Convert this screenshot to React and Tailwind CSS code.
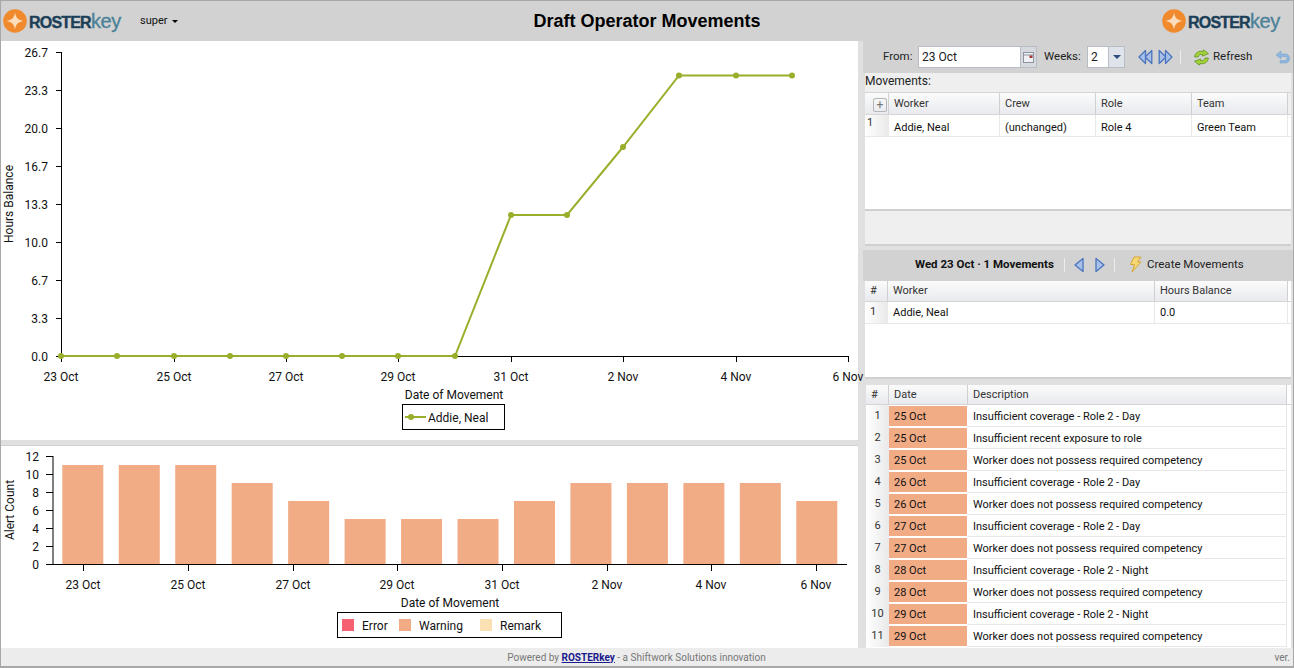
import React from "react";

const font = "font-['Roboto',sans-serif]";

const lineX = [61, 117, 174, 230, 286, 342, 398, 455, 511, 567, 623, 679, 736, 792];
const lineY = [356, 356, 356, 356, 356, 356, 356, 356, 215, 215, 147, 75.5, 75.5, 75.5];
const lineYTicks = [
  ["26.7", 52], ["23.3", 90], ["20.0", 128], ["16.7", 166], ["13.3", 204],
  ["10.0", 242], ["6.7", 280], ["3.3", 318], ["0.0", 356],
];
const lineXTicks = [
  ["23 Oct", 61], ["25 Oct", 174], ["27 Oct", 286], ["29 Oct", 398],
  ["31 Oct", 511], ["2 Nov", 623], ["4 Nov", 736], ["6 Nov", 848],
];
const barValues = [11, 11, 11, 9, 7, 5, 5, 5, 7, 9, 9, 9, 9, 7];
const barXTicks = [
  ["23 Oct", 83], ["25 Oct", 188], ["27 Oct", 293], ["29 Oct", 397],
  ["31 Oct", 502], ["2 Nov", 607], ["4 Nov", 711], ["6 Nov", 816],
];
const alerts = [
  ["25 Oct", "Insufficient coverage - Role 2 - Day"],
  ["25 Oct", "Insufficient recent exposure to role"],
  ["25 Oct", "Worker does not possess required competency"],
  ["26 Oct", "Insufficient coverage - Role 2 - Day"],
  ["26 Oct", "Worker does not possess required competency"],
  ["27 Oct", "Insufficient coverage - Role 2 - Day"],
  ["27 Oct", "Worker does not possess required competency"],
  ["28 Oct", "Insufficient coverage - Role 2 - Night"],
  ["28 Oct", "Worker does not possess required competency"],
  ["29 Oct", "Insufficient coverage - Role 2 - Night"],
  ["29 Oct", "Worker does not possess required competency"],
];

const Logo = () => (
  <div className="flex items-center h-[34px] w-[120px]">
    <svg width="24" height="24" viewBox="0 0 24 24" className="shrink-0">
      <circle cx="12" cy="12" r="11.8" fill="#f08a2c" />
      <path d="M12 3.5 C13 9 15 11 20.5 12 C15 13 13 15 12 20.5 C11 15 9 13 3.5 12 C9 11 11 9 12 3.5 Z" fill="#fbdcbb" />
    </svg>
    <span className="ml-[2px] flex items-baseline font-['Liberation_Sans',sans-serif] leading-none">
      <span className="text-[16px] font-bold tracking-[-0.8px] text-[#1c3f58] [-webkit-text-stroke:0.4px_#1c3f58]">ROSTER</span>
      <span className="text-[20px] tracking-[-0.4px] text-[#4b8198] [-webkit-text-stroke:0.3px_#4b8198]">key</span>
    </span>
  </div>
);

const Header = () => (
  <div className="grid grid-cols-[1fr_auto_1fr] items-center h-[40px] bg-[#d2d2d2]">
    <div className="flex items-center pl-[2px]">
      <Logo />
      <span className="ml-[17px] text-[11px] text-[#111]">super</span>
      <span className="ml-[5px] mt-[1px] w-0 h-0 border-x-[3px] border-x-transparent border-t-[3px] border-t-black" />
    </div>
    <h1 className="font-['Liberation_Sans',sans-serif] text-[18px] font-bold text-black">Draft Operator Movements</h1>
    <div className="flex justify-end pr-[11px]">
      <Logo />
    </div>
  </div>
);

const LineChart = () => (
  <svg width="857" height="399" viewBox="1 41 857 399" className="block bg-white overflow-visible">
    <g stroke="#000" fill="none">
      <path d="M61.5 52V357" />
      {lineYTicks.map(([l, y]) => <path key={l} d={`M56 ${y + 0.5}H61`} />)}
      <path d="M56 356.5H848" />
      {lineXTicks.map(([l, x]) => <path key={l} d={`M${x + 0.5} 356V362`} />)}
    </g>
    <g fontSize="12" fill="#111">
      {lineYTicks.map(([l, y]) => <text key={l} x="48" y={y + 5} textAnchor="end">{l}</text>)}
      {lineXTicks.map(([l, x]) => <text key={l} x={x} y="381" textAnchor="middle">{l}</text>)}
      <text x="454" y="399" textAnchor="middle">Date of Movement</text>
      <text transform="translate(13 204) rotate(-90)" textAnchor="middle">Hours Balance</text>
    </g>
    <polyline points={lineX.map((x, i) => `${x},${lineY[i]}`).join(" ")} fill="none" stroke="#9aae2b" strokeWidth="2" />
    {lineX.map((x, i) => <circle key={x} cx={x} cy={lineY[i]} r="3" fill="#9aae2b" />)}
    <rect x="402.5" y="404.5" width="102" height="25" fill="#fff" stroke="#000" />
    <path d="M405 417H426" stroke="#9aae2b" strokeWidth="2" />
    <circle cx="411" cy="417" r="3" fill="#9aae2b" />
    <text x="428" y="422" fontSize="12" fill="#111">Addie, Neal</text>
  </svg>
);

const BarChart = () => (
  <svg width="857" height="202" viewBox="1 446 857 202" className="block bg-white">
    {barValues.map((v, i) => (
      <rect key={i} x={62.3 + i * 56.46} y={564 - v * 9} width="41" height={v * 9} fill="#f1ab85" />
    ))}
    <g stroke="#000" fill="none">
      <path d="M53 456V565" />
      {[0, 1, 2, 3, 4, 5, 6].map((i) => <path key={i} d={`M46 ${456.5 + i * 18}H53`} />)}
      <path d="M46 564.5H847" />
      {barXTicks.map(([l, x]) => <path key={l} d={`M${x + 0.5} 564V571`} />)}
    </g>
    <g fontSize="12" fill="#111">
      {[12, 10, 8, 6, 4, 2, 0].map((v, i) => <text key={v} x="39" y={461 + i * 18} textAnchor="end">{v}</text>)}
      {barXTicks.map(([l, x]) => <text key={l} x={x} y="589" textAnchor="middle">{l}</text>)}
      <text x="450" y="607" textAnchor="middle">Date of Movement</text>
      <text transform="translate(14 510) rotate(-90)" textAnchor="middle">Alert Count</text>
    </g>
    <rect x="337.5" y="612.5" width="224" height="25" fill="#fff" stroke="#000" />
    <rect x="342" y="619" width="12" height="12" fill="#f56170" />
    <rect x="399" y="619" width="12" height="12" fill="#f1ab85" />
    <rect x="480" y="619" width="12" height="12" fill="#fbe0b4" />
    <g fontSize="12" fill="#111">
      <text x="362" y="630">Error</text>
      <text x="419" y="630">Warning</text>
      <text x="500" y="630">Remark</text>
    </g>
  </svg>
);

const Sep = ({ className = "" }) => <span className={`w-[1px] h-[14px] bg-[#ececec] ${className}`} />;

const ArrowIcon = ({ dir, double }) => (
  <svg width={double ? 15 : 12} height="16" viewBox={double ? "0 0 15 16" : "0 0 12 16"} className="shrink-0">
    <g fill="#a9c1ea" stroke="#4a74bd" strokeWidth="1.3" strokeLinejoin="round" transform={dir === "right" ? (double ? "translate(15 0) scale(-1 1)" : "translate(12 0) scale(-1 1)") : undefined}>
      {double ? (
        <>
          <path d="M13.8 1.5V14.5L7 8Z" />
          <path d="M7.5 1.5V14.5L1 8Z" />
        </>
      ) : (
        <path d="M10 1.5V14.5L2 8Z" />
      )}
    </g>
  </svg>
);

const RefreshIcon = () => (
  <svg width="15" height="17" viewBox="0 0 15 16" className="shrink-0">
    <path d="M.7 7.5C1 3.2 5 .9 9 2L9.5 .3L14.5 4.2L8.3 6.6L8.6 5C6.5 4.4 4.6 5.4 4 7.5Z" fill="#a6d136" stroke="#5c9420" strokeWidth=".8" />
    <path d="M14.3 8.5C14 12.8 10 15.1 6 14L5.5 15.7L.5 11.8L6.7 9.4L6.4 11C8.5 11.6 10.4 10.6 11 8.5Z" fill="#a6d136" stroke="#5c9420" strokeWidth=".8" />
  </svg>
);

const Toolbar = () => (
  <div className="flex items-center h-[32px] bg-[#d2d2d2] text-[11.5px] text-[#222] overflow-hidden">
    <span className="ml-[20px] w-[35px] shrink-0">From:</span>
    <div className="flex h-[22px] w-[119px] shrink-0 border border-[#b8bcc4] bg-white">
      <span className="flex-1 pl-[3px] text-[12px] leading-[20px] text-[#222]">23 Oct</span>
      <span className="flex w-[16px] items-center justify-center bg-[#d6d9de] border-l border-[#b8bcc4]">
        <svg width="11" height="11" viewBox="0 0 11 11">
          <rect x=".5" y=".5" width="10" height="10" fill="#eef0f3" stroke="#8b94a3" />
          <path d="M1 3H10" stroke="#8b94a3" />
          <rect x="6.5" y="3.5" width="3" height="2.5" fill="#a33" />
        </svg>
      </span>
    </div>
    <span className="ml-[7px] w-[43px] shrink-0">Weeks:</span>
    <div className="flex h-[22px] w-[38px] shrink-0 border border-[#b8bcc4] bg-white">
      <span className="flex-1 pl-[3px] text-[12px] leading-[20px]">2</span>
      <span className="flex w-[16px] items-center justify-center bg-[#dfe3ea] border-l border-[#b8bcc4]">
        <span className="w-0 h-0 border-x-[4px] border-x-transparent border-t-[4px] border-t-[#2d4d80]" />
      </span>
    </div>
    <span className="ml-[13px] flex gap-[5px]">
      <ArrowIcon dir="left" double />
      <ArrowIcon dir="right" double />
    </span>
    <Sep className="ml-[7px]" />
    <span className="ml-[13px] flex"><RefreshIcon /></span>
    <span className="ml-[4px] w-[62px] shrink-0">Refresh</span>
    <svg width="15" height="14" viewBox="0 0 15 14" className="shrink-0">
      <path d="M6 1L1 5L6 9V6.5H10C11.5 6.5 12 7.5 12 8.5C12 9.5 11.5 10.5 10 10.5H5V13H10.5C13 13 14.5 11 14.5 8.5C14.5 6 13 4 10.5 4H6Z" fill="#8fb6dc" stroke="#7ba6d2" strokeWidth=".6" />
    </svg>
  </div>
);

const headCell = "h-full flex items-center pl-[5px] border-r border-[#d0d0d0] bg-linear-to-b from-[#fbfbfb] to-[#e8eaee] text-[11px] text-[#333]";
const bodyCell = "h-full flex items-center pl-[5px] border-r border-[#e8e8e8] text-[11px] text-[#111]";
const numCell = "h-full flex items-center bg-linear-to-r from-[#ffffff] to-[#e9e9e9] text-[11px] text-[#333]";

const MovementsGrid = () => (
  <div className="flex flex-col h-[173px] mx-[2px] border-b-2 border-[#d0d0d0] bg-[#efefef]">
    <div className="h-[19px] text-[12px] leading-[17px] text-[#222]">Movements:</div>
    <div className="flex h-[23px] border-y border-[#d5d5d5]">
      <div className={`${headCell} w-[24px] justify-end !pl-0 pr-[1px] pt-[2px]`}>
        <span className="flex h-[14px] w-[14px] items-center justify-center rounded-[2px] border border-[#b5b5b5] text-[12px] leading-none text-[#777]">+</span>
      </div>
      <div className={`${headCell} w-[111px] pt-[2px]`}>Worker</div>
      <div className={`${headCell} w-[96px] pt-[2px]`}>Crew</div>
      <div className={`${headCell} w-[96px] pt-[2px]`}>Role</div>
      <div className={`${headCell} w-[96px] pt-[2px]`}>Team</div>
    </div>
    <div className="flex-1 bg-white">
      <div className="flex h-[22px] border-b border-[#e8e8e8]">
        <div className={`${numCell} w-[24px] !items-start pl-[2px]`}>1</div>
        <div className={`${bodyCell} w-[111px] pt-[5px]`}>Addie, Neal</div>
        <div className={`${bodyCell} w-[96px] pt-[5px]`}>(unchanged)</div>
        <div className={`${bodyCell} w-[96px] pt-[5px]`}>Role 4</div>
        <div className={`${bodyCell} w-[96px] pt-[5px]`}>Green Team</div>
      </div>
    </div>
    <div className="h-[35px] border-t-2 border-[#d0d0d0] bg-[#efefef]" />
  </div>
);

const DayToolbar = () => (
  <div className="flex items-center h-[31px] pb-[2px] mt-[4px] bg-[#d2d2d2] text-[11.5px] text-[#222]">
    <span className="ml-[52px] w-[139px] shrink-0 whitespace-nowrap font-bold text-[#111]">Wed 23 Oct · 1 Movements</span>
    <Sep className="ml-[10px]" />
    <span className="ml-[8px] flex"><ArrowIcon dir="left" /></span>
    <span className="ml-[9px] flex"><ArrowIcon dir="right" /></span>
    <Sep className="ml-[8px]" />
    <svg width="15" height="17" viewBox="0 0 15 17" className="ml-[13px] shrink-0">
      <path d="M6 1H13L9.5 6H13L4 16L6.5 8.5H2.5Z" fill="#f7d774" stroke="#d7a63a" strokeLinejoin="round" />
    </svg>
    <span className="ml-[4px]">Create Movements</span>
  </div>
);

const BalanceGrid = () => (
  <div className="h-[98px] mx-[2px] border-b-2 border-[#d0d0d0] bg-white">
    <div className="flex h-[21px] border-b border-[#d5d5d5]">
      <div className={`${headCell} w-[23px]`}>#</div>
      <div className={`${headCell} w-[267px]`}>Worker</div>
      <div className={`${headCell} w-[133px]`}>Hours Balance</div>
    </div>
    <div className="flex h-[22px] border-b border-[#e8e8e8]">
      <div className={`${numCell} w-[23px] pl-[5px]`}>1</div>
      <div className={`${bodyCell} w-[267px] pt-[2px]`}>Addie, Neal</div>
      <div className={`${bodyCell} w-[133px] pt-[2px]`}>0.0</div>
    </div>
  </div>
);

const AlertGrid = () => (
  <div className="flex-1 mt-[6px] ml-[3px] mr-[2px] bg-white overflow-hidden">
    <div className="flex h-[20px] border-b border-[#d5d5d5]">
      <div className={`${headCell} w-[23px] pt-[2px]`}>#</div>
      <div className={`${headCell} w-[79px] pt-[2px]`}>Date</div>
      <div className={`${headCell} w-[319px] pt-[2px]`}>Description</div>
    </div>
    {alerts.map(([date, text], i) => (
      <div key={i} className="flex h-[22px]">
        <div className={`${numCell} w-[23px] justify-center`}>{i + 1}</div>
        <div className="h-[20px] w-[78px] mt-[1px] mr-[1px] bg-[#f1ab85] pl-[5px] text-[11px] leading-[21px] text-[#111]">{date}</div>
        <div className={`${bodyCell} w-[319px] !h-[22px] border-b pt-[3px]`}>{text}</div>
      </div>
    ))}
  </div>
);

const Footer = () => (
  <div className="relative flex h-[20px] items-center justify-center pr-[21px] border-b-2 border-[#a8a8a8] bg-[#ececec] text-[10px] text-[#777]">
    <span>
      Powered by <a className="font-bold text-[#1a1a8c] underline">ROSTERkey</a> - a Shiftwork Solutions innovation
    </span>
    <span className="absolute right-[3px] top-[2px]">ver.</span>
  </div>
);

export default function App() {
  return (
    <div className={`${font} flex h-[668px] w-[1294px] flex-col overflow-hidden border-x border-t border-[#a8a8a8] bg-[#e0e0e0]`}>
      <Header />
      <div className="flex flex-1 min-h-0">
        <div className="w-[857px] shrink-0">
          <LineChart />
          <div className="h-[6px] border-b border-[#d0d0d0] bg-[#e0e0e0]" />
          <BarChart />
        </div>
        <div className="flex-1 min-w-0 ml-[5px] flex flex-col">
          <Toolbar />
          <MovementsGrid />
          <DayToolbar />
          <BalanceGrid />
          <AlertGrid />
        </div>
      </div>
      <Footer />
    </div>
  );
}
